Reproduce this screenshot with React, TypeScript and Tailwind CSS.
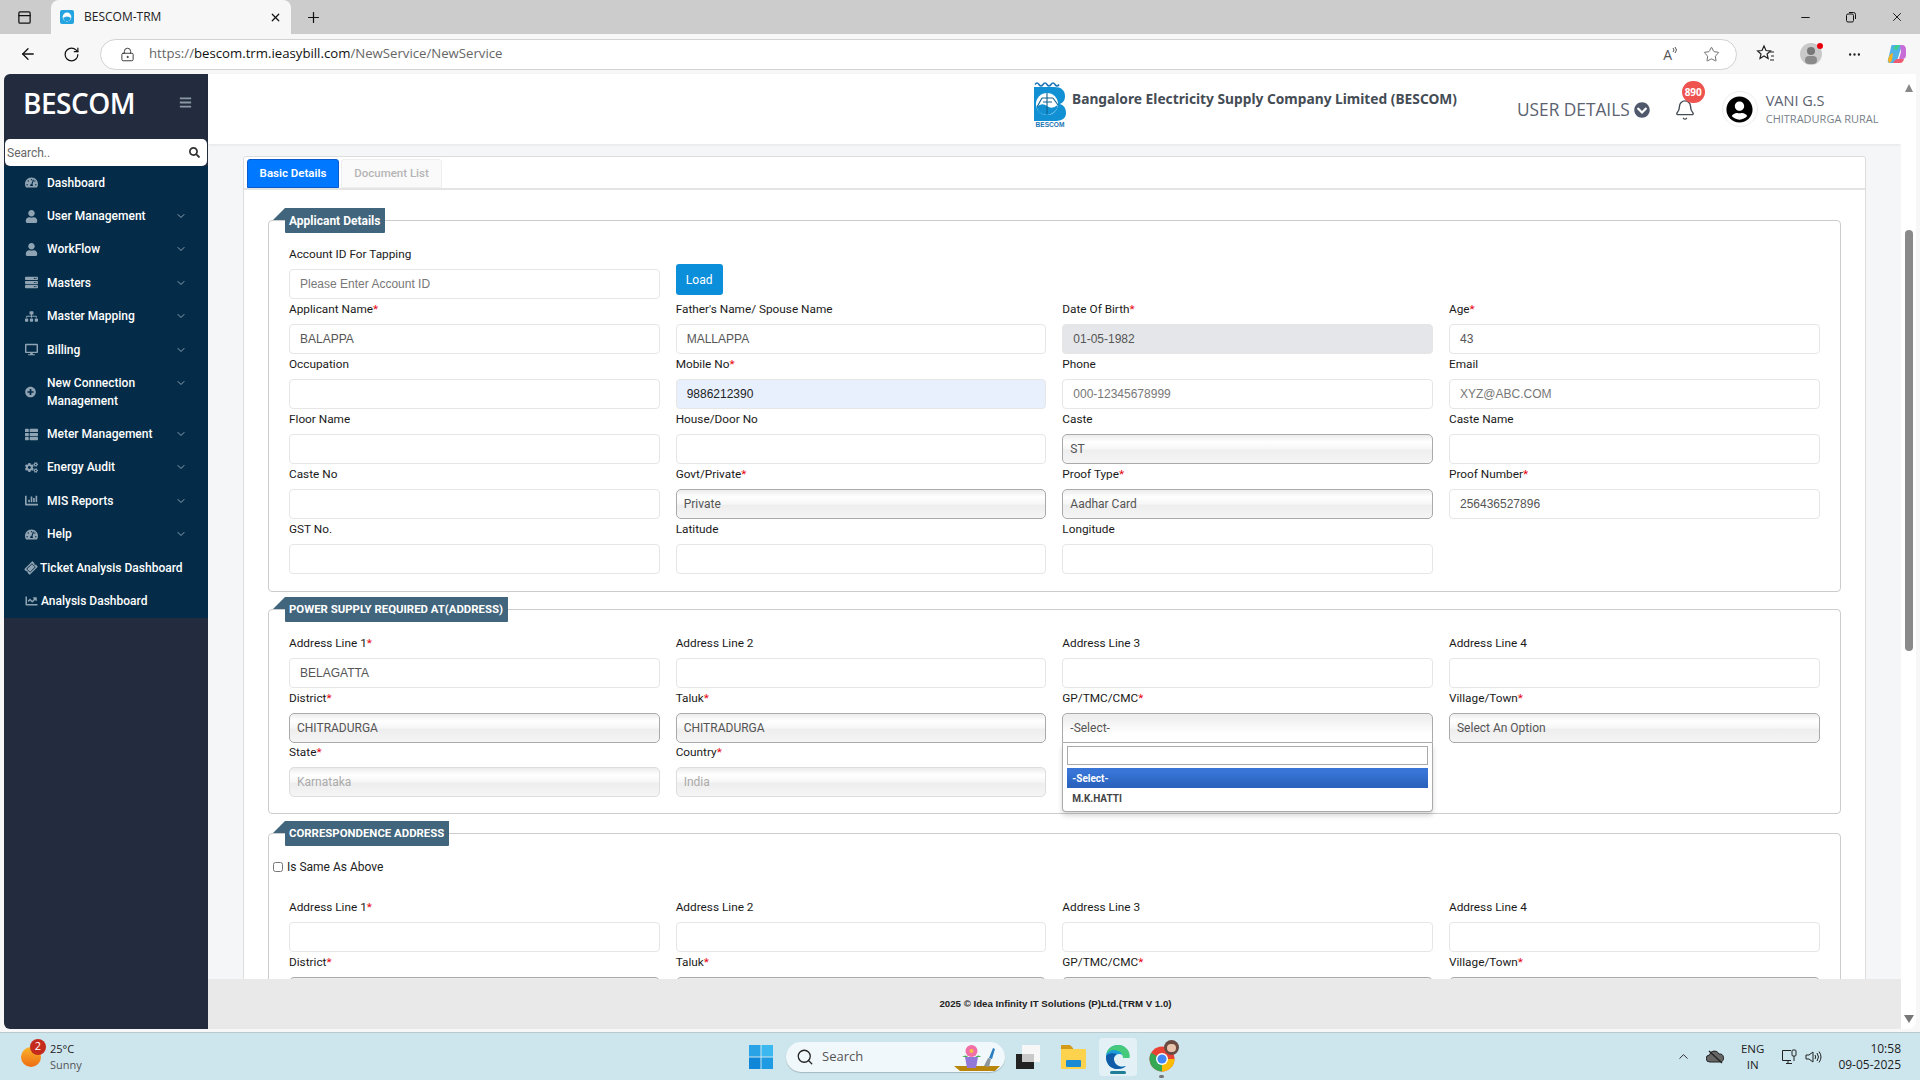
import { ReactNode } from "react";
import {
  ArrowLeft,
  Bell,
  ChevronDown,
  ChevronUp,
  EllipsisVertical,
  LockKeyhole,
  Minus,
  PanelTop,
  Plus,
  RotateCw,
  Search,
  Star,
  X,
} from "lucide-react";
import {
  FaBars,
  FaChartBar,
  FaChartLine,
  FaChevronCircleDown,
  FaCogs,
  FaDesktop,
  FaPlusCircle,
  FaSearch,
  FaServer,
  FaSitemap,
  FaTachometerAlt,
  FaThList,
  FaTicketAlt,
  FaUser,
  FaUserCircle,
} from "react-icons/fa";

const menu = [
  { icon: <FaTachometerAlt />, label: "Dashboard" },
  { icon: <FaUser />, label: "User Management", arrow: true },
  { icon: <FaUser />, label: "WorkFlow", arrow: true },
  { icon: <FaServer />, label: "Masters", arrow: true },
  { icon: <FaSitemap />, label: "Master Mapping", arrow: true },
  { icon: <FaDesktop />, label: "Billing", arrow: true },
];

const menu2 = [
  { icon: <FaThList />, label: "Meter Management", arrow: true },
  { icon: <FaCogs />, label: "Energy Audit", arrow: true },
  { icon: <FaChartBar />, label: "MIS Reports", arrow: true },
  { icon: <FaTachometerAlt />, label: "Help", arrow: true },
];

function MenuItem({ icon, label, arrow }: { icon: ReactNode; label: string; arrow?: boolean }) {
  return (
    <div className="flex h-[33.4px] items-center pl-[21px] pr-[21px] text-[12px] font-medium text-white">
      <span className="flex w-[22px] shrink-0 text-[13px] text-[#8fa3b3]">{icon}</span>
      <span className="flex-1 whitespace-nowrap">{label}</span>
      {arrow && <ChevronDown className="h-3 w-3 text-[#8fa3b3]" />}
    </div>
  );
}

function Sidebar() {
  return (
    <aside className="flex w-[204px] shrink-0 flex-col overflow-hidden rounded-l-[6px] bg-[#232c3f] font-['Roboto',sans-serif]">
      <div className="flex h-[65px] shrink-0 items-center justify-between pb-[8px] pl-[19px] pr-[16px]">
        <span className="font-['Open_Sans',sans-serif] text-[28px] font-semibold leading-none tracking-[-0.5px] text-white">BESCOM</span>
        <FaBars className="text-[13px] text-[#8b97a3]" />
      </div>
      <div className="mx-[1px] flex h-[27px] shrink-0 items-center justify-between rounded-[5px] bg-white pl-[2px] pr-[7px]">
        <span className="text-[12px] text-[#666]">Search..</span>
        <FaSearch className="text-[11px] text-[#333]" />
      </div>
      <nav className="bg-[#042c48]">
        {menu.map((m) => (
          <MenuItem key={m.label} {...m} />
        ))}
        <div className="flex h-[51px] items-center pl-[21px] pr-[21px] text-[12px] font-medium leading-[18px] text-white">
          <FaPlusCircle className="mr-[11px] w-[11px] shrink-0 text-[#8fa3b3]" />
          <span className="flex-1">
            New Connection
            <br />
            Management
          </span>
          <ChevronDown className="mb-[18px] h-3 w-3 text-[#8fa3b3]" />
        </div>
        {menu2.map((m) => (
          <MenuItem key={m.label} {...m} />
        ))}
        <div className="flex h-[33.4px] items-center pl-[21px] text-[12px] font-medium text-white">
          <FaTicketAlt className="mr-[3px] w-[12px] shrink-0 -rotate-45 text-[#8fa3b3]" />
          Ticket Analysis Dashboard
        </div>
        <div className="flex h-[33.4px] items-center pl-[21px] text-[12px] font-medium text-white">
          <FaChartLine className="mr-[3px] w-[13px] shrink-0 text-[#8fa3b3]" />
          Analysis Dashboard
        </div>
      </nav>
    </aside>
  );
}

function BescomLogo() {
  return (
    <svg width="34" height="48" viewBox="0 0 34 48" className="shrink-0">
      <path d="M2 4.5q2-3 4 0t4 0 4 0 4 0 4 0 4 0" fill="none" stroke="#1d76b8" strokeWidth="1.6" />
      <path d="M1 7H21Q32 7 32 16.5Q32 22 27 24Q33 26 33 33Q33 41 21 41H1Z" fill="#1191d4" />
      <circle cx="14" cy="24" r="11" fill="#fff" />
      <path d="M3.5 27Q9 22 14 26T24.5 25V28Q20 35 14 35Q6 35 3.5 27Z" fill="#1191d4" />
      <path d="M14 13V34M9 18H20M10 22H19M9 18L4 27M20 18L25 25" stroke="#10608f" strokeWidth="1.1" fill="none" />
      <text x="17" y="47" textAnchor="middle" fontSize="6.6" fontWeight="700" fill="#1b75b5" fontFamily="Liberation Sans">
        BESCOM
      </text>
    </svg>
  );
}

function Header() {
  return (
    <header className="flex h-[70px] shrink-0 bg-white font-['Open_Sans',sans-serif] shadow-[0_1px_3px_rgba(0,0,0,0.07)]">
      <div className="ml-[825px] mt-[6px]">
        <BescomLogo />
      </div>
      <div className="ml-[5px] mt-[15px] font-['Noto_Sans',sans-serif] text-[13.75px] font-bold leading-5 text-[#444c55]">
        Bangalore Electricity Supply Company Limited (BESCOM)
      </div>
      <div className="ml-[60px] mt-[25px] flex h-[22px] items-center gap-[4px] text-[#5b6270]">
        <span className="text-[17.3px] font-normal">USER DETAILS</span>
        <FaChevronCircleDown className="text-[16px] text-[#50586b]" />
      </div>
      <div className="relative ml-[24px] mt-[25px] h-[22px] w-[20px]">
        <Bell className="h-[22px] w-[22px] text-[#444c55]" strokeWidth={1.5} />
        <span className="absolute -top-[18px] left-[8px] flex h-[22px] w-[23px] items-center justify-center rounded-full bg-[#ef5350] text-[10px] font-bold text-white">
          890
        </span>
      </div>
      <div className="ml-[28px] mt-[17px] flex h-[36px] w-[36px] items-center justify-center rounded-full border border-[#eee]">
        <FaUserCircle className="text-[27px] text-black" />
      </div>
      <div className="ml-[8px] mt-[16px] text-[#5b6270]">
        <div className="text-[14.5px] leading-[21px]">VANI G.S</div>
        <div className="whitespace-nowrap text-[11px] leading-[15px] text-[#777f88]">CHITRADURGA RURAL</div>
      </div>
    </header>
  );
}

function Label({ text, req }: { text: string; req?: boolean }) {
  return (
    <div className="h-[25px] text-[11.8px] leading-[20px] text-[#1a1a1a]">
      {text}
      {req && <span className="text-red-600">*</span>}
    </div>
  );
}

function Field({ label, req, value, placeholder, tone }: { label: string; req?: boolean; value?: string; placeholder?: string; tone?: string }) {
  const bg = tone === "disabled" ? "bg-[#e4e6e9] text-[#555]" : tone === "filled" ? "bg-[#e8f0fe] text-[#222]" : "bg-white text-[#555]";
  return (
    <div>
      <Label text={label} req={req} />
      <input
        defaultValue={value}
        placeholder={placeholder}
        className={`block h-[30px] w-full rounded-[4px] border border-[#e6e6e6] pl-[10px] font-['Liberation_Sans',sans-serif] text-[12px] outline-none placeholder:text-[#777] ${bg}`}
      />
    </div>
  );
}

function Chosen({ label, req, value, disabled, compact }: { label: string; req?: boolean; value: string; disabled?: boolean; compact?: boolean }) {
  return (
    <div className={compact ? "-mt-px" : ""}>
      <Label text={label} req={req} />
      <div
        className={`flex h-[30px] items-center rounded-[5px] border bg-[linear-gradient(#ececec_0%,#fff_25%,#f6f6f6_50%,#eee_55%,#f5f5f5_100%)] pl-[7px] text-[12px] ${
          disabled ? "border-[#ddd] text-[#aaa]" : "border-[#aaa] text-[#555]"
        }`}
      >
        {value}
      </div>
    </div>
  );
}

function OpenChosen() {
  return (
    <div className="relative">
      <Label text="GP/TMC/CMC" req />
      <div className="flex h-[30px] items-center rounded-t-[5px] border border-[#aaa] bg-[linear-gradient(#eee_10%,#fff_70%)] pl-[7px] text-[12px] text-[#555]">
        -Select-
      </div>
      <div className="absolute left-0 right-0 top-[55px] z-10 h-[69px] rounded-b-[4px] border border-t-0 border-[#aaa] bg-white px-[4px] pt-[3px] shadow-[0_4px_5px_rgba(0,0,0,0.15)]">
        <div className="h-[19px] border border-[#aaa] bg-white" />
        <div className="mt-[3px] flex h-[20px] items-center bg-[linear-gradient(#3875d7_20%,#2a62bc_90%)] pl-[5px] text-[10px] font-bold text-white">-Select-</div>
        <div className="flex h-[20px] items-center pl-[5px] text-[10px] font-bold text-[#444]">M.K.HATTI</div>
      </div>
    </div>
  );
}

function Legend({ title, caps }: { title: string; caps?: boolean }) {
  return (
    <div className="relative ml-[16px] -mt-[13px] w-fit">
      <span className="absolute -left-[12px] top-0 h-0 w-0 border-b-[12px] border-l-[12px] border-b-[#41657c] border-l-transparent" />
      <div className={`flex h-[25px] items-center rounded-b-[1px] bg-[#41657c] pl-[4px] pr-[5px] font-bold text-white ${caps ? "text-[11.4px]" : "text-[12px]"}`}>{title}</div>
    </div>
  );
}

const gridCls = "grid grid-cols-[repeat(4,370.67px)] gap-x-4 pl-5";

function ApplicantDetails() {
  return (
    <section className="rounded-[4px] border border-[#ccc] pb-[17px]">
      <Legend title="Applicant Details" />
      <div className={`${gridCls} mt-[11px]`}>
        <Field label="Account ID For Tapping" placeholder="Please Enter Account ID" />
        <div className="pt-[20px]">
          <button className="h-[31px] w-[47px] rounded-[3px] bg-[#0b8fdb] text-[12px] text-white">Load</button>
        </div>
        <div />
        <div />
        <Field label="Applicant Name" req value="BALAPPA" />
        <Field label="Father's Name/ Spouse Name" value="MALLAPPA" />
        <Field label="Date Of Birth" req value="01-05-1982" tone="disabled" />
        <Field label="Age" req value="43" />
        <Field label="Occupation" />
        <Field label="Mobile No" req value="9886212390" tone="filled" />
        <Field label="Phone" placeholder="000-12345678999" />
        <Field label="Email" placeholder="XYZ@ABC.COM" />
        <Field label="Floor Name" />
        <Field label="House/Door No" />
        <Chosen label="Caste" value="ST" />
        <Field label="Caste Name" />
        <Field label="Caste No" />
        <Chosen label="Govt/Private" req value="Private" />
        <Chosen label="Proof Type" req value="Aadhar Card" />
        <Field label="Proof Number" req value="256436527896" />
        <Field label="GST No." />
        <Field label="Latitude" />
        <Field label="Longitude" />
      </div>
    </section>
  );
}

function PowerSupply() {
  return (
    <section className="mt-[17px] rounded-[4px] border border-[#ccc] pb-[16px]">
      <Legend title="POWER SUPPLY REQUIRED AT(ADDRESS)" caps />
      <div className={`${gridCls} mt-[11px]`}>
        <Field label="Address Line 1" req value="BELAGATTA" />
        <Field label="Address Line 2" />
        <Field label="Address Line 3" />
        <Field label="Address Line 4" />
        <Chosen label="District" req value="CHITRADURGA" />
        <Chosen label="Taluk" req value="CHITRADURGA" />
        <OpenChosen />
        <Chosen label="Village/Town" req value="Select An Option" />
        <Chosen label="State" req value="Karnataka" disabled compact />
        <Chosen label="Country" req value="India" disabled compact />
      </div>
    </section>
  );
}

function Correspondence() {
  return (
    <section className="mt-[19px] rounded-[4px] border border-[#ccc] pb-[16px]">
      <Legend title="CORRESPONDENCE ADDRESS" caps />
      <label className="mt-[13px] flex h-[16px] items-center gap-[4px] pl-[4px] text-[12px] text-[#222]">
        <input type="checkbox" className="h-[10px] w-[10px]" />
        Is Same As Above
      </label>
      <div className={`${gridCls} mt-[22px]`}>
        <Field label="Address Line 1" req />
        <Field label="Address Line 2" />
        <Field label="Address Line 3" />
        <Field label="Address Line 4" />
        <Chosen label="District" req value="" />
        <Chosen label="Taluk" req value="" />
        <Chosen label="GP/TMC/CMC" req value="" />
        <Chosen label="Village/Town" req value="" />
      </div>
    </section>
  );
}

function MainPanel() {
  return (
    <main className="flex min-w-0 flex-1 flex-col bg-[#f5f6f8]">
      <Header />
      <div className="min-h-0 flex-1 overflow-hidden pl-[35px] pt-[12px] font-['Roboto',sans-serif]">
        <div className="w-[1623px] rounded-[3px] border border-[#ddd] bg-white">
          <div className="flex h-[33px] items-end gap-[2px] border-b-2 border-[#e4e4e4] pl-[3px]">
            <div className="flex h-[29px] w-[92px] items-center justify-center rounded-t-[3px] border border-[#0a5bd0] bg-[#0078ff] text-[11.5px] font-semibold text-white">Basic Details</div>
            <div className="flex h-[29px] w-[101px] items-center justify-center rounded-t-[3px] border border-[#eee] bg-[#fafafa] text-[11.5px] font-medium text-[#b5b5b5]">Document List</div>
          </div>
          <div className="px-[24px] pt-[30px]">
            <ApplicantDetails />
            <PowerSupply />
            <Correspondence />
          </div>
        </div>
      </div>
      <footer className="relative z-20 flex h-[50px] shrink-0 items-center justify-center bg-[#e9e9e9] pl-[2px] font-['Liberation_Sans',sans-serif] text-[9.7px] font-bold text-[#222]">
        2025 © Idea Infinity IT Solutions (P)Ltd.(TRM V 1.0)
      </footer>
    </main>
  );
}

function ScrollBar() {
  return (
    <div className="flex w-[15px] shrink-0 flex-col items-center rounded-br-[8px] bg-white">
      <span className="mt-[10px] h-0 w-0 border-x-[4px] border-b-[8px] border-x-transparent border-b-[#888]" />
      <div className="mt-[138px] h-[421px] w-[8px] rounded-full bg-[#8a8a8a]" />
      <div className="flex-1" />
      <span className="mb-[6px] h-0 w-0 border-x-[5px] border-t-[8px] border-x-transparent border-t-[#777]" />
    </div>
  );
}

function TabStrip() {
  return (
    <div className="flex h-[34px] shrink-0 items-center bg-[#cccccc] font-['Open_Sans',sans-serif]">
      <PanelTop className="ml-[17px] h-[15px] w-[15px] text-[#111]" strokeWidth={2} />
      <div className="ml-[19px] flex h-[34px] w-[240px] items-center rounded-t-[8px] bg-[#f7f7f7] pl-[8px] pr-[9px]">
        <svg width="16" height="16" viewBox="0 0 16 16">
          <rect x="1" y="1" width="14" height="14" rx="2" fill="#23a3e0" />
          <circle cx="8" cy="8" r="4.4" fill="#fff" />
          <path d="M4 9q4-3 8 0l-2 3H6Z" fill="#23a3e0" />
        </svg>
        <span className="ml-[9px] flex-1 text-[12px] text-[#222]">BESCOM-TRM</span>
        <X className="h-[13px] w-[13px] text-[#111]" strokeWidth={2.2} />
      </div>
      <Plus className="ml-[14px] h-[17px] w-[17px] text-[#111]" strokeWidth={1.7} />
      <div className="flex-1" />
      <Minus className="h-[13px] w-[13px] text-[#111]" strokeWidth={1.8} />
      <svg width="12" height="12" viewBox="0 0 12 12" className="ml-[33px]" fill="none" stroke="#111">
        <rect x="1.5" y="3" width="7" height="8" rx="1.5" />
        <path d="M4 1.5h4.5a2 2 0 0 1 2 2V8" />
      </svg>
      <X className="ml-[33px] mr-[16px] h-[14px] w-[14px] text-[#111]" strokeWidth={1.6} />
    </div>
  );
}

function Toolbar() {
  return (
    <div className="flex h-[40px] shrink-0 items-center bg-[#f7f7f7] font-['Open_Sans',sans-serif]">
      <ArrowLeft className="ml-[19px] h-[18px] w-[18px] text-[#111]" strokeWidth={1.7} />
      <RotateCw className="ml-[26px] h-[17px] w-[17px] text-[#111]" strokeWidth={1.7} />
      <div className="ml-[20px] flex h-[31px] w-[1637px] items-center rounded-full border border-[#d2d2d2] bg-white pl-[19px]">
        <LockKeyhole className="h-[15px] w-[15px] text-[#333]" strokeWidth={1.5} />
        <span className="ml-[14px] text-[13.2px] text-[#666]">
          https://<span className="text-[#111]">bescom.trm.ieasybill.com</span>/NewService/NewService
        </span>
        <div className="flex-1" />
        <span className="text-[14px] text-[#555]">A</span>
        <svg width="6" height="10" viewBox="0 0 6 10" fill="none" stroke="#555" className="mb-[6px]">
          <path d="M1 2q2 2 0 4M3 1q3 3 0 6" />
        </svg>
        <Star className="ml-[25px] mr-[16px] h-[17px] w-[17px] text-[#555]" strokeWidth={1.2} />
      </div>
      <svg width="20" height="20" viewBox="0 0 20 20" className="ml-[19px]" fill="none" stroke="#222" strokeWidth="1.2">
        <path d="M8 2l2 4.5 4.5.5-3.4 3 1 4.5L8 12l-4 2.5 1-4.5-3.4-3L6 6.5Z" />
        <path d="M14 8h4M15 12h3M14 16h4" />
      </svg>
      <div className="relative ml-[24px] h-[22px] w-[22px] rounded-full bg-[#c9c9c9]">
        <span className="absolute left-[7px] top-[4px] h-[8px] w-[8px] rounded-full bg-[#777]" />
        <span className="absolute bottom-[1px] left-[5px] h-[8px] w-[12px] rounded-full bg-[#8a8a8a]" />
        <span className="absolute -right-[1px] top-0 h-[6px] w-[6px] rounded-full bg-red-600" />
      </div>
      <EllipsisVertical className="ml-[25px] h-[15px] w-[15px] rotate-90 text-[#222]" strokeWidth={1.8} />
      <svg width="22" height="22" viewBox="0 0 22 22" className="ml-[23px]">
        <path d="M7 2h8q2 0 1 3l-4 13q-1 2-3 2H5q-3 0-2-3L6 4q.5-2 1-2Z" fill="#4fb3e8" />
        <path d="M15 2h2q4 0 4 5v5q0 4-4 4h-3l2-7Z" fill="#c86dd7" />
        <path d="M3 17q1-6 5-7l-1 7q-1 3-3 3Z" fill="#f5b324" />
        <path d="M8 20h7q3 0 4-4h-6q-3 0-5 4Z" fill="#ee5b6f" />
        <path d="M8 6q1-3 4-4h3l-3 5Z" fill="#3ecf8e" />
      </svg>
    </div>
  );
}

function TaskbarIcons() {
  return (
    <div className="ml-[649px] flex items-center">
      <svg width="24" height="24" viewBox="0 0 24 24">
        <path d="M0 0h11.5v11.5H0z" fill="#2aa3e6" />
        <path d="M12.5 0H24v11.5H12.5z" fill="#3cb8f0" />
        <path d="M0 12.5h11.5V24H0z" fill="#0f86d8" />
        <path d="M12.5 12.5H24V24H12.5z" fill="#1e9be3" />
      </svg>
      <div className="ml-[13px] flex h-[30px] w-[219px] items-center rounded-full bg-[#f1f8fb] pl-[10px] shadow-[0_1px_1px_rgba(0,0,0,0.2)]">
        <Search className="h-[18px] w-[18px] text-[#222]" strokeWidth={1.7} />
        <span className="ml-[8px] flex-1 font-['Open_Sans',sans-serif] text-[13px] text-[#555]">Search</span>
        <svg width="46" height="30" viewBox="0 0 46 30" className="mr-[5px]">
          <path d="M0 24h46l-5 5H6Z" fill="#b8860b" />
          <path d="M11 15h13l-2 11h-9Z" fill="#9278d8" />
          <circle cx="17.5" cy="9" r="6" fill="#f06fa6" />
          <circle cx="17.5" cy="9" r="2" fill="#f4c542" />
          <path d="M8 15q4-3 6 0ZM21 15q4-3 6 0Z" fill="#4caf50" />
          <path d="M30 24l4-8 3 1-2 8Z" fill="#8c969c" />
          <path d="M35 16l4-10 2 1-3 10Z" fill="#2b7fc1" />
        </svg>
      </div>
      <svg width="24" height="24" viewBox="0 0 24 24" className="ml-[11px]">
        <rect x="0" y="9" width="18" height="15" fill="#222" />
        <rect x="6" y="0" width="18" height="17" fill="#f7f7f7" />
        <rect x="6" y="9" width="12" height="8" fill="#c9c9c9" />
      </svg>
      <svg width="26" height="24" viewBox="0 0 26 24" className="ml-[21px]">
        <path d="M0 1q0-1 1-1h8l3 3v2H0Z" fill="#d29a16" />
        <rect x="0" y="4" width="25" height="20" rx="1" fill="#fdd34d" />
        <rect x="5" y="15" width="15" height="7" rx="1" fill="#1a8ad4" />
      </svg>
      <div className="ml-[12px] flex h-[38px] w-[38px] flex-col items-center rounded-[4px] bg-[#e3f1f6] pt-[7px]">
        <svg width="24" height="24" viewBox="0 0 24 24">
          <path d="M12 0C5 0 0 5 0 12c0 7 5 12 11 12 4 0 7-1 9-3-5 2-11 0-12-6-.5-3 2-6 5-6 3 0 5 2 5 4h5c1-7-4-13-11-13Z" fill="#1b9cd8" />
          <path d="M12 0C6 0 1 4 .5 9 3 5 8 4 12 6c3 1 5 4 5 7h6.5C25 6 19 0 12 0Z" fill="#45c97a" />
          <path d="M0 12c0 7 5 12 11 12 4 0 7-1 9-3-5 2-11 0-12-6-.5-3 1-5 3-6C6 7 0 9 0 12Z" fill="#0f5ba8" />
        </svg>
        <span className="mt-[2px] h-[3px] w-[16px] rounded-full bg-[#1e7f96]" />
      </div>
      <div className="relative ml-[12px] h-[30px] w-[30px]">
        <svg width="26" height="26" viewBox="0 0 26 26" className="absolute bottom-0 left-0">
          <circle cx="13" cy="13" r="12.5" fill="#e94235" />
          <path d="M13 13L2.2 6.8A12.5 12.5 0 0 0 13 25.5Z" fill="#34a853" />
          <path d="M13 13L13 25.5A12.5 12.5 0 0 0 25.5 13Z" fill="#fbbc04" />
          <circle cx="13" cy="13" r="6" fill="#fff" />
          <circle cx="13" cy="13" r="4.6" fill="#4285f4" />
        </svg>
        <span className="absolute right-0 top-[-2px] h-[15px] w-[15px] rounded-full bg-[#6b4a42]" />
        <span className="absolute right-[3px] top-[2px] h-[8px] w-[9px] rounded-full bg-[#e8c4ac]" />
        <span className="absolute -bottom-[6px] left-[10px] h-[3px] w-[5px] rounded-full bg-[#777]" />
      </div>
    </div>
  );
}

function Taskbar() {
  return (
    <div className="flex h-[48px] shrink-0 items-center border-t border-[#b9c9ce] bg-[#cde6ee] font-['Open_Sans',sans-serif] text-[#222]">
      <div className="relative ml-[21px] h-[20px] w-[20px] rounded-full bg-[linear-gradient(#f9b42c,#ee6c13)]">
        <span className="absolute -top-[8px] left-[9px] flex h-[16px] w-[16px] items-center justify-center rounded-full bg-[#c42b1c] text-[11px] text-white">2</span>
      </div>
      <div className="ml-[9px] w-[50px] text-[11px] leading-[16px]">
        <div>25°C</div>
        <div className="text-[#555]">Sunny</div>
      </div>
      <TaskbarIcons />
      <div className="flex-1" />
      <ChevronUp className="h-[15px] w-[15px]" strokeWidth={1.5} />
      <svg width="18" height="14" viewBox="0 0 18 14" className="ml-[15px]">
        <path d="M4 12a3.5 3.5 0 0 1-.5-7A5 5 0 0 1 13 4a4 4 0 0 1 1 8Z" fill="#666" stroke="#222" />
        <path d="M3 1l13 12" stroke="#222" strokeWidth="1.3" />
      </svg>
      <div className="ml-[17px] text-center text-[11.5px] leading-[16px]">
        ENG
        <br />
        IN
      </div>
      <svg width="16" height="16" viewBox="0 0 16 16" fill="none" stroke="#222" className="ml-[17px]">
        <path d="M10 1.5H1.5v10H10M5 14.5h6M7 11.5v3" />
        <rect x="11" y="1" width="4" height="6" rx="1" />
        <path d="M13 7v5" />
      </svg>
      <svg width="17" height="14" viewBox="0 0 17 14" fill="none" stroke="#222" className="ml-[8px]">
        <path d="M1 5h3l4-3v10l-4-3H1ZM10 5q1.5 2 0 4M12 3q3 4 0 8M14 1.5q4 5.5 0 11" />
      </svg>
      <div className="ml-[16px] mr-[19px] text-right text-[12px] leading-[16px]">
        10:58
        <br />
        09-05-2025
      </div>
    </div>
  );
}

export default function App() {
  return (
    <div className="flex h-[1080px] w-[1920px] flex-col overflow-hidden bg-[#f7f7f7]">
      <TabStrip />
      <Toolbar />
      <div className="flex h-[955px] shrink-0 pl-[4px] pr-[4px]">
        <Sidebar />
        <MainPanel />
        <ScrollBar />
      </div>
      <div className="h-[3px] shrink-0" />
      <Taskbar />
    </div>
  );
}
